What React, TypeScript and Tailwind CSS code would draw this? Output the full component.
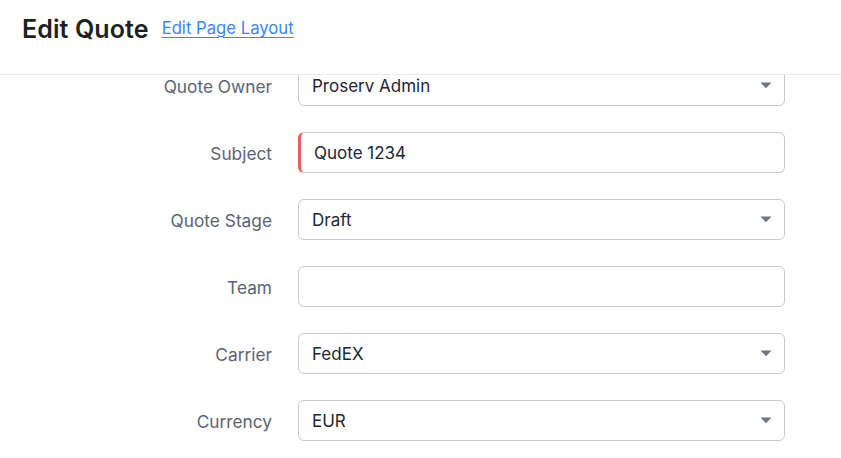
import React from "react";

type Field = { label: string; value: string; select?: boolean; required?: boolean };

const fields: Field[] = [
  { label: "Quote Owner", value: "Proserv Admin", select: true },
  { label: "Subject", value: "Quote 1234", required: true },
  { label: "Quote Stage", value: "Draft", select: true },
  { label: "Team", value: "" },
  { label: "Carrier", value: "FedEX", select: true },
  { label: "Currency", value: "EUR", select: true },
];

function Caret() {
  return (
    <svg width="12" height="7" viewBox="0 0 12 7" className="shrink-0">
      <path d="M0.5 0.5 H11.5 L6 6.2 Z" fill="#6f7480" />
    </svg>
  );
}

export default function App() {
  return (
    <div
      className="w-[841px] h-[458px] bg-white overflow-hidden flex flex-col"
      style={{ fontFamily: "Inter, 'Noto Sans', sans-serif" }}
    >
      <div className="relative z-10 h-[75px] shrink-0 bg-white border-b border-[#e9eaec] flex items-start pl-[22px] pt-[14px]">
        <span className="text-[25px] leading-[30px] font-semibold text-[#1e1f21] tracking-[0.1px]">Edit Quote</span>
        <a className="ml-[13px] mt-[4px] text-[16.7px] leading-[20px] text-[#3c86f0] underline underline-offset-[3px] decoration-[1px]">
          Edit Page Layout
        </a>
      </div>
      <div className="flex-1 overflow-hidden">
        <div className="-mt-[10px] flex flex-col gap-[26px]">
          {fields.map((f) => (
            <div key={f.label} className="flex items-center h-[41px]">
              <div className="w-[273px] pr-[1px] pt-[2px] text-right text-[17.3px] text-[#5b6373]">{f.label}</div>
              <div
                className={
                  "ml-[25px] w-[487px] h-[41px] rounded-[6px] border border-[#c6c9cf] flex items-center pr-[12px] text-[17px] text-[#1f2532] " +
                  (f.required ? "border-l-[3px] border-l-[#f05a57] pl-[13px]" : "pl-[13px]")
                }
              >
                <span className="flex-1 pt-[2px]">{f.value}</span>
                {f.select && <Caret />}
              </div>
            </div>
          ))}
        </div>
      </div>
    </div>
  );
}
